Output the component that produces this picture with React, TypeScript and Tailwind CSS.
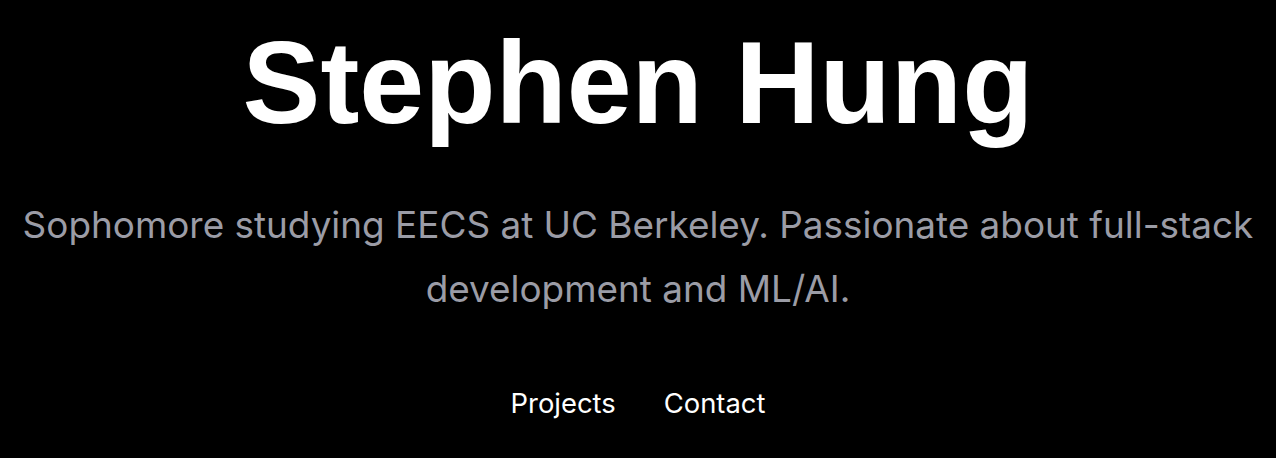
export default function App() {
  return (
    <main className="min-h-screen bg-black text-white">
      <section className="mx-auto flex max-w-[1276px] flex-col items-center px-2 pt-[25px] text-center">
        <h1 className="font-['Liberation_Sans',Arial,sans-serif] text-[116.7px] font-bold leading-none tracking-normal">
          Stephen Hung
        </h1>
        <p className="mt-[51px] font-['Inter',sans-serif] text-[36.9px] leading-[64px] text-[#9b9ca6]">
          Sophomore studying EECS at UC Berkeley. Passionate about full-stack development and ML/AI.
        </p>
        <nav className="mt-[64px] flex gap-12 font-['Inter',sans-serif] text-[27.4px] leading-[36px] text-white">
          <a href="#projects">Projects</a>
          <a href="#contact">Contact</a>
        </nav>
      </section>
    </main>
  );
}
